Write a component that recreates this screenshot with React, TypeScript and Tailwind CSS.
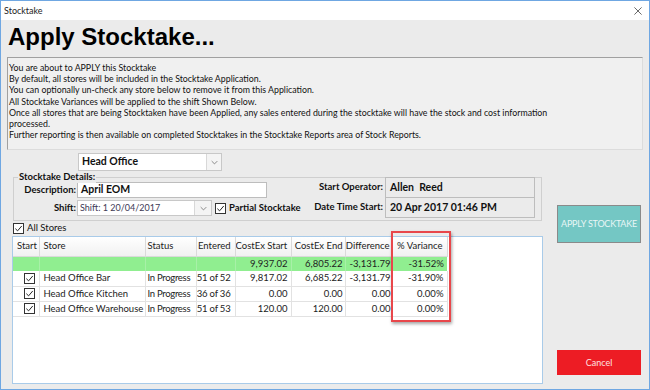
import React from "react";

const ui = { fontFamily: "Lato, 'Liberation Sans', sans-serif" };

const Check: React.FC<{ className?: string }> = ({ className = "" }) => (
  <span className={`flex items-center justify-center w-[11px] h-[11px] border border-[#333] bg-white ${className}`}>
    <svg viewBox="0 0 10 10" className="w-[9px] h-[9px]" fill="none" stroke="#222" strokeWidth={1.1}>
      <path d="M1.5 5.2 L4 7.6 L8.6 2.2" />
    </svg>
  </span>
);

const Chevron: React.FC = () => (
  <svg viewBox="0 0 10 6" className="w-[7px] h-[5px]" fill="none" stroke="#777" strokeWidth={1.2}>
    <path d="M1 1 L5 5 L9 1" />
  </svg>
);

const lines = [
  "You are about to APPLY this Stocktake",
  "By default, all stores will be included in the Stocktake Application.",
  "You can optionally un-check any store below to remove it from this Application.",
  "All Stocktake Variances will be applied to the shift Shown Below.",
  "Once all stores that are being Stocktaken have been Applied, any sales entered during the stocktake will have the stock and cost information",
  "processed.",
  "Further reporting is then available on completed Stocktakes in the Stocktake Reports area of Stock Reports.",
];

const rows = [
  { store: "Head Office Bar", status: "In Progress", entered: "51 of 52", start: "9,817.02", end: "6,685.22", diff: "-3,131.79", pct: "-31.90%" },
  { store: "Head Office Kitchen", status: "In Progress", entered: "36 of 36", start: "0.00", end: "0.00", diff: "0.00", pct: "0.00%" },
  { store: "Head Office Warehouse", status: "In Progress", entered: "51 of 53", start: "120.00", end: "120.00", diff: "0.00", pct: "0.00%" },
];

const th = "font-normal whitespace-nowrap overflow-hidden border-r border-b border-[#dadada]";
const td = "whitespace-nowrap overflow-hidden border-r border-b border-[#e2e2e2]";
const tg = "whitespace-nowrap overflow-hidden border-r border-[#a8f0a8]";

const App: React.FC = () => {
  return (
    <div className="w-[650px] h-[390px] flex flex-col border border-[#6fa7e2] bg-[#ebebeb] text-[#111] overflow-hidden" style={ui}>
      {/* Title bar */}
      <div className="h-[19px] bg-white flex items-center justify-between pl-[3px] pr-[7px] shrink-0">
        <span className="text-[9px] text-[#222]">Stocktake</span>
        <svg viewBox="0 0 10 10" className="w-[8px] h-[8px]" stroke="#444" strokeWidth={1}>
          <path d="M0.5 0.5 L9.5 9.5 M9.5 0.5 L0.5 9.5" />
        </svg>
      </div>

      <div className="flex-1 flex flex-col pl-[6px] pr-[6px]">
        <h1 className="mt-[5px] ml-[1px] text-[24px] leading-[24px] font-bold text-black" style={{ fontFamily: "'Liberation Sans', Arial, sans-serif" }}>
          Apply Stocktake...
        </h1>

        {/* Info box */}
        <div className="mt-[8px] h-[93px] border border-[#a0a0a0] border-r-[#dcdcdc] border-b-[#dcdcdc] bg-[#f0f0f0] pl-[1px] pt-[4px]">
          {lines.map((l) => (
            <div key={l} className="text-[8.8px] leading-[11.2px] text-[#111] whitespace-nowrap">{l}</div>
          ))}
        </div>

        <div className="flex flex-1">
          {/* Left column */}
          <div className="ml-[5px] w-[531px] shrink-0 flex flex-col relative">
            {/* Store dropdown */}
            <div className="mt-[3px] ml-[66px] w-[144px] h-[18px] bg-white border border-[#c8c8c8] flex items-center">
              <span className="flex-1 pl-[3px] text-[10.5px] font-bold">Head Office</span>
              <span className="w-[15px] h-full border-l border-[#d8d8d8] bg-[#f4f4f4] flex items-center justify-center"><Chevron /></span>
            </div>

            {/* Stocktake details group */}
            <div className="mt-[6px] ml-[1px] w-[529px] h-[44px] border border-[#cfcfcf] relative flex">
              <span className="absolute left-[4px] top-[-7px] bg-[#ebebeb] px-[1px] text-[9.5px] leading-[12px] font-bold">Stocktake Details:</span>
              <div className="w-[300px] pt-[4px] flex flex-col">
                <div className="flex items-center h-[16px]">
                  <span className="w-[63px] text-right pr-[1px] text-[9.5px] font-bold">Description:</span>
                  <span className="w-[190px] h-[16px] bg-white border border-[#bdbdbd] flex items-center pl-[3px] text-[10.5px] font-bold">April EOM</span>
                </div>
                <div className="flex items-center h-[16px] mt-[2px]">
                  <span className="w-[63px] text-right pr-[1px] text-[9.5px] font-bold">Shift:</span>
                  <span className="w-[135px] h-[16px] bg-white border border-[#c8c8c8] flex items-center">
                    <span className="flex-1 pl-[2px] text-[9px] text-[#3d3a55]">Shift: 1 20/04/2017</span>
                    <span className="w-[17px] h-full border-l border-[#d8d8d8] bg-[#f4f4f4] flex items-center justify-center"><Chevron /></span>
                  </span>
                  <Check className="ml-[3px]" />
                  <span className="ml-[3px] text-[9.5px] font-bold whitespace-nowrap">Partial Stocktake</span>
                </div>
              </div>
              <div className="mt-[-1px] flex flex-col">
                <div className="flex items-center h-[21px]">
                  <span className="w-[69px] text-right text-[9.5px] font-bold mr-[2px] whitespace-nowrap">Start Operator:</span>
                  <span className="w-[150px] h-[21px] border border-[#bdbdbd] bg-[#ebebeb] flex items-center pl-[4px] text-[10.5px] font-bold">Allen&nbsp; Reed</span>
                </div>
                <div className="flex items-center h-[21px] mt-[-1px]">
                  <span className="w-[69px] text-right text-[9.5px] font-bold mr-[2px] whitespace-nowrap">Date Time Start:</span>
                  <span className="w-[150px] h-[21px] border border-[#bdbdbd] bg-[#ebebeb] flex items-center pl-[4px] text-[10.5px] font-bold">20 Apr 2017 01:46 PM</span>
                </div>
              </div>
            </div>

            {/* All stores */}
            <div className="mt-[1px] ml-[1px] h-[12px] flex items-center">
              <Check />
              <span className="ml-[3px] text-[9.5px]">All Stores</span>
            </div>

            {/* Table panel */}
            <div className="mt-[2px] w-[531px] h-[148px] bg-white border border-[#a9cbe9] relative">
              <table className="w-[434px] border-collapse text-[9.5px] text-[#222]" style={{ tableLayout: "fixed" }}>
                <colgroup>
                  <col className="w-[26px]" />
                  <col className="w-[106px]" />
                  <col className="w-[51px]" />
                  <col className="w-[39px]" />
                  <col className="w-[56px]" />
                  <col className="w-[54px]" />
                  <col className="w-[47px]" />
                  <col className="w-[55px]" />
                </colgroup>
                <thead>
                  <tr className="h-[19px] bg-gradient-to-b from-white to-[#f1f1f1]">
                    <th className={`${th} text-left pl-[4px]`}>Start</th>
                    <th className={`${th} text-left pl-[4px]`}>Store</th>
                    <th className={`${th} text-left pl-[2px]`}>Status</th>
                    <th className={`${th} text-right pr-[4px]`}>Entered</th>
                    <th className={`${th} text-right pr-[4px]`}>CostEx Start</th>
                    <th className={`${th} text-right pr-[2px]`}>CostEx End</th>
                    <th className={`${th} text-right pr-[2px]`}>Difference</th>
                    <th className={`${th} text-right pr-[4px]`}>% Variance</th>
                  </tr>
                </thead>
                <tbody>
                  <tr className="h-[15px] bg-[#90ee90]">
                    <td className={tg} />
                    <td className={tg} />
                    <td className={tg} />
                    <td className={tg} />
                    <td className={`${tg} text-right pr-[3px]`}>9,937.02</td>
                    <td className={`${tg} text-right pr-[2px]`}>6,805.22</td>
                    <td className={`${tg} text-right pr-[1px]`}>-3,131.79</td>
                    <td className="text-right pr-[3px]">-31.52%</td>
                  </tr>
                  {rows.map((r) => (
                    <tr key={r.store} className="h-[15px]">
                      <td className={td}><Check className="ml-[11px] w-[10px] h-[10px]" /></td>
                      <td className={`${td} pl-[4px]`}>{r.store}</td>
                      <td className={`${td} pl-[2px] tracking-[-0.3px]`}>{r.status}</td>
                      <td className={`${td} text-right pr-[4px] tracking-[-0.2px]`}>{r.entered}</td>
                      <td className={`${td} text-right pr-[3px]`}>{r.start}</td>
                      <td className={`${td} text-right pr-[2px]`}>{r.end}</td>
                      <td className={`${td} text-right pr-[1px]`}>{r.diff}</td>
                      <td className={`${td} text-right pr-[3px]`}>{r.pct}</td>
                    </tr>
                  ))}
                </tbody>
              </table>
              {/* highlight annotation */}
              <div className="absolute left-[378px] top-[-6px] w-[60px] h-[91px] border-2 border-[#e8474b] shadow-[1px_2px_3px_rgba(0,0,0,0.35)] pointer-events-none" />
            </div>
          </div>

          {/* Right column */}
          <div className="ml-[14px] w-[84px] flex flex-col">
            <button className="mt-[55px] h-[38px] bg-[#74c7c4] border border-[#8a8a8a] text-[9px] text-[#e8f6f6] tracking-tight">
              APPLY STOCKTAKE
            </button>
            <button className="mt-[107px] h-[25px] bg-[#ed1c24] text-[9px] text-[#fde0e0]">
              Cancel
            </button>
          </div>
        </div>
      </div>
    </div>
  );
};

export default App;
